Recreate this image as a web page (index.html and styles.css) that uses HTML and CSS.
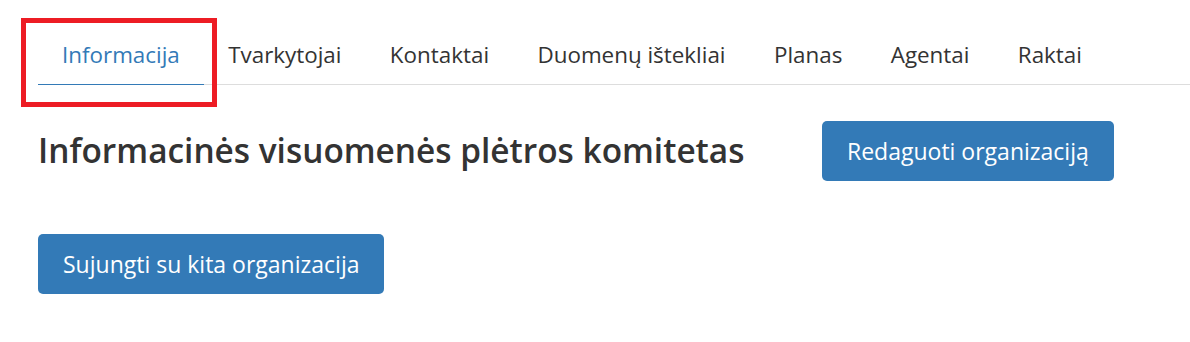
FILE: index.html
```html
<!DOCTYPE html>
<html lang="lt">
<head>
    <meta charset="UTF-8">
    <meta name="viewport" content="width=device-width, initial-scale=1.0">
    <title>Informacinės visuomenės plėtros komitetas</title>
    <link rel="stylesheet" href="styles.css">
</head>
<body>
    <div class="page">
        <!-- skirtukai -->
        <ul class="tabs">
            <li class="active"><a href="#">Informacija</a></li>
            <li><a href="#">Tvarkytojai</a></li>
            <li><a href="#">Kontaktai</a></li>
            <li><a href="#">Duomenų ištekliai</a></li>
            <li><a href="#">Planas</a></li>
            <li><a href="#">Agentai</a></li>
            <li><a href="#">Raktai</a></li>
        </ul>

        <div class="org-header">
            <h1>Informacinės visuomenės plėtros komitetas</h1>
            <a href="#" class="btn">Redaguoti organizaciją</a>
        </div>

        <div class="actions">
            <a href="#" class="btn">Sujungti su kita organizacija</a>
        </div>

        <!-- pažymėtas skirtukas -->
        <div class="highlight"></div>
    </div>
</body>
</html>
```

FILE: styles.css
```css
/* Pagrindiniai stiliai */
body {
    margin: 0;
    font-family: "Open Sans", "Noto Sans", sans-serif;
    color: #333;
    background-color: #fff;
}

.page {
    position: relative;
    padding: 27px 0 0 38px;
}

/* Skirtukai */
.tabs {
    display: flex;
    list-style: none;
    margin: 0;
    padding: 0;
    border-bottom: 1px solid #ddd;
}

.tabs li {
    margin-bottom: -1px;
}

.tabs a {
    display: block;
    padding: 12px 24.4px 13px 24px;
    font-size: 22.4px;
    line-height: 32px;
    color: #333;
    text-decoration: none;
    border-bottom: 1px solid transparent;
}

.tabs .active a {
    color: #337ab7;
    border-bottom-color: #337ab7;
}

/* Organizacijos antraštė */
.org-header {
    display: flex;
    align-items: flex-start;
    margin-top: 36px;
}

.org-header h1 {
    flex: 0 0 784px;
    margin: 11px 0 0;
    font-size: 33.4px;
    font-weight: 600;
    line-height: 36px;
    color: #333;
}

.actions {
    margin-top: 53px;
}

/* Mygtukai */
.btn {
    display: inline-block;
    padding: 14px 25px;
    font-size: 23px;
    line-height: 32px;
    color: #fff;
    background-color: #337ab7;
    border-radius: 5px;
    text-decoration: none;
}

.btn:hover {
    background-color: #286090;
}

/* Raudonas rėmelis aplink aktyvų skirtuką */
.highlight {
    position: absolute;
    left: 21px;
    top: 18px;
    width: 196px;
    height: 89px;
    box-sizing: border-box;
    border: 5px solid #ed1c24;
}
```
